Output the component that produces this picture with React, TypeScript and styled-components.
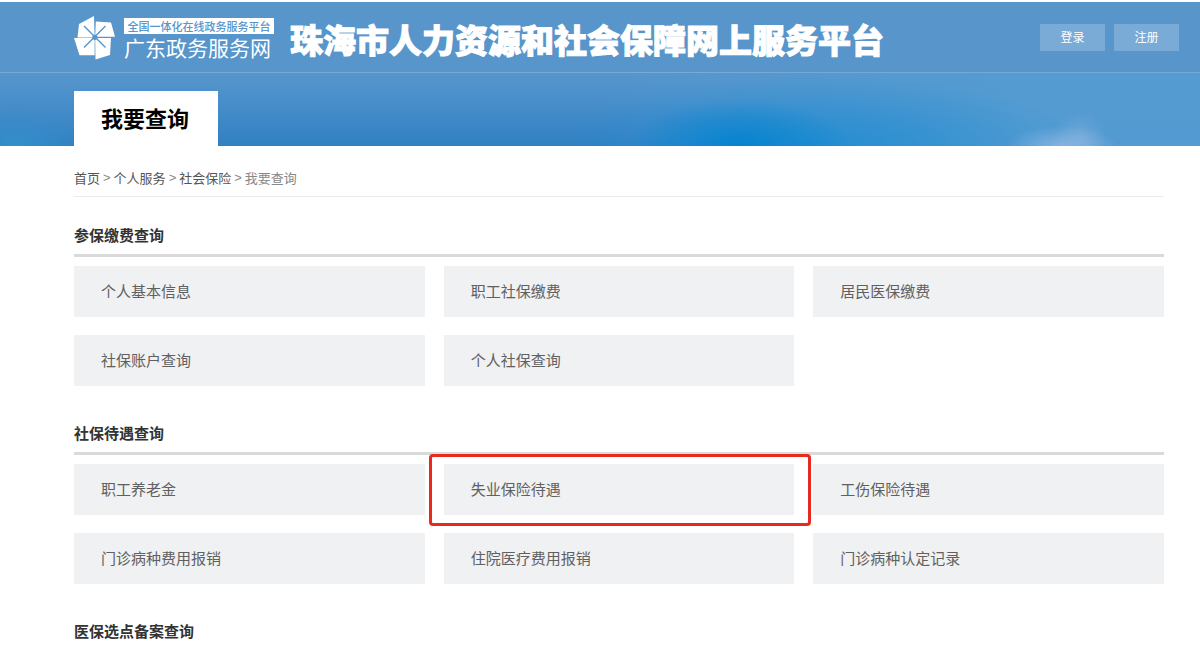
import React from "react";
import styled, { createGlobalStyle } from "styled-components";

const GlobalStyle = createGlobalStyle`
  * { box-sizing: border-box; }
  body {
    margin: 0;
    background: #fff;
    color: #333;
    font-family: "Noto Sans CJK SC", "Liberation Sans", sans-serif;
    font-size: 15px;
  }
  h1, h2, p { margin: 0; }
`;

const Header = styled.header`
  margin-top: 2px;
  background:
    radial-gradient(ellipse 26px 26px at 1080px 136px, rgba(150, 186, 228, 0.4) 0%, rgba(150, 186, 228, 0) 100%),
    radial-gradient(ellipse 56px 20px at 1062px 100%, rgba(150, 186, 228, 0.75) 0%, rgba(150, 186, 228, 0) 100%),
    radial-gradient(ellipse 110px 46px at 740px 100%, rgba(0, 130, 208, 0.9) 0%, rgba(6, 132, 208, 0.6) 40%, rgba(20, 140, 210, 0) 100%),
    radial-gradient(ellipse 260px 70px at 820px 100%, rgba(28, 142, 212, 0.75) 0%, rgba(60, 150, 212, 0) 100%),
    radial-gradient(ellipse 60px 36px at 16px 100%, rgba(52, 144, 204, 0.9) 0%, rgba(52, 144, 204, 0) 100%),
    linear-gradient(90deg, rgba(84, 156, 210, 0) 50%, rgba(84, 156, 210, 0.95) 85%),
    linear-gradient(180deg, #5795cb 0%, #5795cb 50%, #4a90cc 66%, #3180c2 100%);
`;

const TopBar = styled.div`
  display: flex;
  align-items: flex-start;
  height: 71px;
  padding: 0 21px 0 74px;
  background: #5795cb;
  border-bottom: 1px solid #75a9d8;
`;

const Brand = styled.a`
  display: flex;
  gap: 8px;
  padding-top: 14px;
  color: #fff;
  text-decoration: none;
`;

const BrandText = styled.span`
  display: flex;
  flex-direction: column;
  width: 150px;
`;

const BrandTag = styled.span`
  height: 16px;
  margin-top: 2px;
  background: #fff;
  color: #5795cb;
  font-size: 11px;
  font-weight: 500;
  line-height: 16px;
  text-align: center;
  white-space: nowrap;
`;

const BrandName = styled.span`
  font-size: 21px;
  line-height: 26px;
  white-space: nowrap;
`;

const SiteTitle = styled.h1`
  flex: 1;
  padding: 18px 0 0 16px;
  color: #fff;
  font-size: 33px;
  font-weight: 900;
  line-height: 38px;
  white-space: nowrap;
  -webkit-text-stroke: 1px #fff;
`;

const Account = styled.div`
  display: flex;
  gap: 9px;
  padding-top: 22px;
`;

const AccountButton = styled.button`
  width: 65px;
  height: 27px;
  padding: 0 0 2px;
  border: 0;
  background: #7aaad6;
  color: #fff;
  font-family: inherit;
  font-size: 12px;
  line-height: 24px;
  cursor: pointer;
`;

const TabBar = styled.div`
  display: flex;
  padding: 18px 36px 0 74px;
`;

const PageTab = styled.h2`
  padding: 0 29px 2px 27px;
  background: #fff;
  color: #000;
  font-size: 22px;
  font-weight: 700;
  line-height: 53px;
`;

const Content = styled.main`
  padding: 22px 36px 0 74px;
`;

const Breadcrumb = styled.nav`
  display: flex;
  gap: 3px;
  padding-bottom: 8px;
  margin-bottom: 27px;
  border-bottom: 1px solid #ebebeb;
  color: #888;
  font-size: 13px;
  line-height: 20px;
`;

const Separator = styled.span`
  font-family: "Liberation Sans", sans-serif;
`;

const Crumb = styled.a`
  color: #555;
  text-decoration: none;
`;

const Section = styled.section`
  margin-bottom: 36px;

  &:last-child { margin-bottom: 0; }
`;

const SectionTitle = styled.h2`
  font-size: 15px;
  font-weight: 700;
  line-height: 22px;
`;

const TileGrid = styled.div`
  display: grid;
  grid-template-columns: repeat(3, 1fr);
  gap: 18px 19px;
  margin-top: 8px;
  padding-top: 9px;
  border-top: 3px solid #dadada;
`;

const Tile = styled.a<{ $marked?: boolean }>`
  position: relative;
  padding: 0 27px 2px;
  background: #f0f1f3;
  color: #606060;
  line-height: 49px;
  text-decoration: none;

  ${({ $marked }) =>
    $marked &&
    `&::after {
      content: "";
      position: absolute;
      z-index: 1;
      inset: -10px -17px -11px -15px;
      border: 3px solid #e8291f;
      border-radius: 4px;
    }`}
`;

const sections = [
  {
    title: "参保缴费查询",
    items: ["个人基本信息", "职工社保缴费", "居民医保缴费", "社保账户查询", "个人社保查询"],
  },
  {
    title: "社保待遇查询",
    items: ["职工养老金", "失业保险待遇", "工伤保险待遇", "门诊病种费用报销", "住院医疗费用报销", "门诊病种认定记录"],
  },
  { title: "医保选点备案查询", items: [] },
];

const markedItem = "失业保险待遇";
const trail = ["首页", "个人服务", "社会保险"];

const Pinwheel = () => (
  <svg width="42" height="44" viewBox="0 0 42 44" aria-hidden="true">
    <g fill="#fff">
      <path d="M5 8L20 0L20.6 21.5H3.5Z" />
      <path d="M21.8 5.5L37 6.5L41 20.8H21.2Z" />
      <path d="M21.2 22H37L36 39L21.5 43.5Z" />
      <path d="M0 22H20.6V39.3H5.5Z" />
    </g>
    <path d="M10 10L31.5 31.5M31.5 10L10 31.5" stroke="#5795cb" strokeWidth="1.4" />
    <circle cx="20.9" cy="21.3" r="2.6" fill="#5795cb" />
  </svg>
);

export default function App() {
  return (
    <>
      <GlobalStyle />
      <Header>
        <TopBar>
          <Brand href="#">
            <Pinwheel />
            <BrandText>
              <BrandTag>全国一体化在线政务服务平台</BrandTag>
              <BrandName>广东政务服务网</BrandName>
            </BrandText>
          </Brand>
          <SiteTitle>珠海市人力资源和社会保障网上服务平台</SiteTitle>
          <Account>
            <AccountButton type="button">登录</AccountButton>
            <AccountButton type="button">注册</AccountButton>
          </Account>
        </TopBar>
        <TabBar>
          <PageTab>我要查询</PageTab>
        </TabBar>
      </Header>
      <Content>
        <Breadcrumb aria-label="面包屑">
          {trail.map((name) => (
            <React.Fragment key={name}>
              <Crumb href="#">{name}</Crumb>
              <Separator>&gt;</Separator>
            </React.Fragment>
          ))}
          <span>我要查询</span>
        </Breadcrumb>
        {sections.map(({ title, items }) => (
          <Section key={title}>
            <SectionTitle>{title}</SectionTitle>
            {items.length > 0 && (
              <TileGrid>
                {items.map((item) => (
                  <Tile key={item} href="#" $marked={item === markedItem}>
                    {item}
                  </Tile>
                ))}
              </TileGrid>
            )}
          </Section>
        ))}
      </Content>
    </>
  );
}
